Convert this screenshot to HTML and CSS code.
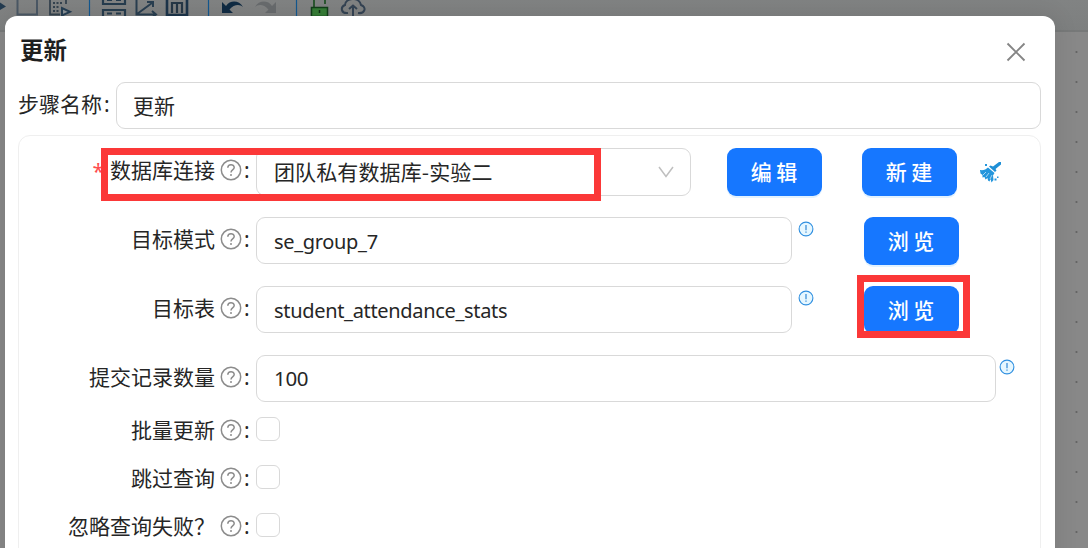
FILE: index.html
```html
<!DOCTYPE html>
<html lang="zh-CN">
<head>
<meta charset="utf-8">
<title>更新</title>
<link rel="stylesheet" href="styles.css">
</head>
<body>
<svg class="defs" width="0" height="0">
  <symbol id="help" viewBox="0 0 22 22"><circle cx="11" cy="11" r="9.7" fill="none" stroke="#8c8c8c" stroke-width="1.5"/><path d="M7.8 8.8C7.8 4.6 14.2 4.7 14.2 8.6C14.2 11 11 10.9 11 13.4" fill="none" stroke="#8c8c8c" stroke-width="1.5"/><circle cx="11" cy="15.9" r="1" fill="#8c8c8c"/></symbol>
  <symbol id="info" viewBox="0 0 16 16"><circle cx="8" cy="8" r="6.9" fill="#e6f7ff" stroke="#2f8fe0" stroke-width="1.1"/><path d="M8 4v5.2M8 10.6v1.2" stroke="#2f86d6" stroke-width="1.2"/></symbol>
</svg>
<div class="workspace">
  <svg class="toolbar" width="1088" height="32" viewBox="0 0 1088 32">
    <path d="M0 2.500L6 6.500L0 10z" fill="#233b50"/>
    <path d="M17.500 0V14.500H37V0" fill="none" stroke="#4b5865" stroke-width="2"/>
    <path d="M50 0V14.500H60M66 0V4" fill="none" stroke="#35434f" stroke-width="1.800"/>
    <path d="M53 3h9M53 7h7M53 11h6" fill="none" stroke="#35434f" stroke-width="2" stroke-dasharray="2 1.500"/>
    <path d="M62 8v7.500l8-3.700z" fill="#8b9398" stroke="#263e53" stroke-width="2"/>
    <path d="M89.500 0V16M208.500 0V16M296.500 0V16" stroke="#14588f" stroke-width="1.200"/>
    <path d="M103 0V4H125V0M103 16V10H125V16M107 0h5M116 0h5M107 13.500h5M116 13.500h5" fill="none" stroke="#263c4e" stroke-width="2.200"/>
    <path d="M136.500 0V14.500H155M137 14L152 3M147 2h6v5M152 11l4 3.500l-4 3" fill="none" stroke="#293e50" stroke-width="2"/>
    <path d="M167 0V15H187V0" fill="none" stroke="#1c344a" stroke-width="2.600"/>
    <path d="M172 13V3H182V13M177 3V13" fill="none" stroke="#263746" stroke-width="2.200"/>
    <path d="M222 2V13H233L229.500 9.500C234 4 240 4 243 7C239 0 230 0 226 6z" fill="#102b43"/>
    <path d="M276 2V13H265L268.500 9.500C264 4 258 4 255 7C259 0 268 0 272 6z" fill="#686b6d"/>
    <path d="M314 7V0M325 4V0" fill="none" stroke="#174d1c" stroke-width="1.600"/>
    <path d="M311.500 7.500h16v9h-16z" fill="#367c36" stroke="#123f19" stroke-width="1.500"/><path d="M319.500 10v3" stroke="#102f14" stroke-width="1.500"/>
    <path d="M348 13C341 14 340 7 345 5C345 -2 359 -4 361 5C367 7 365 14 358 13M353 16V6M349 9L353 5.500L357 9" fill="none" stroke="#344353" stroke-width="2"/>
    <path d="M0 31H1088" stroke="#777979" stroke-width="2"/>
  </svg>
  <svg class="grid" width="24" height="516" viewBox="0 32 24 516"><path d="M12.500 52V548" stroke="#626262" stroke-width="2.200" stroke-linecap="round" stroke-dasharray="0 30"/></svg>
  <main class="modal">
    <header class="head"><h1>更新</h1><svg width="20" height="20" viewBox="0 0 20 20"><path d="M1.500 1.500L18.500 18.500M18.500 1.500L1.500 18.500" stroke="#858585" stroke-width="1.900"/></svg></header>
    <div class="name-row"><label>步骤名称<span class="colon">:</span></label><div class="field">更新</div></div>
    <section class="panel">
      <div class="row"><label><b class="required">*</b>数据库连接<svg class="help"><use href="#help"/></svg><span class="colon">:</span></label>
        <div class="field select"><span>团队私有数据库-实验二</span><svg width="16" height="12" viewBox="0 0 16 12"><path d="M1 1L8 10.500L15 1" fill="none" stroke="#bfbfbf" stroke-width="1.500"/></svg></div>
        <button class="edit">编 辑</button><button class="create">新 建</button>
        <svg class="broom" width="24" height="24" viewBox="0 0 24 24"><path d="M20 2h2v2.500L16.500 9L17.500 10.500L16 12L10 6.500L11.500 5.500L14 6.500z" fill="#1e8fd6"/><path d="M9 7.500L15.500 13L14 15.500L14.500 20L12.500 22.500L11.500 19L10.500 21.500L9 20.500L8.500 18L6.500 19.500L5.500 17L3.500 17.500L3.500 15L1.500 13.500L1 10C4.500 10.500 7 9.500 9 7.500z" fill="#2496dc"/><path d="M10 13l-3 4M13 15l-2 4M7 12l-3 3" stroke="#fff" stroke-width=".6"/><path d="M6 4h2v2H6zM15.500 18.500h2v2h-2zM18 16.500h1.500v1.500H18z" fill="#2496dc"/></svg>
      </div>
      <div class="row"><label>目标模式<svg class="help"><use href="#help"/></svg><span class="colon">:</span></label><div class="field medium latin">se_group_7</div><svg class="info"><use href="#info"/></svg><button class="browse">浏 览</button></div>
      <div class="row"><label>目标表<svg class="help"><use href="#help"/></svg><span class="colon">:</span></label><div class="field medium latin">student_attendance_stats</div><svg class="info"><use href="#info"/></svg><button class="browse">浏 览</button></div>
      <div class="row last"><label>提交记录数量<svg class="help"><use href="#help"/></svg><span class="colon">:</span></label><div class="field wide latin number">100</div><svg class="info"><use href="#info"/></svg></div>
      <div class="row check"><label>批量更新<svg class="help"><use href="#help"/></svg><span class="colon">:</span></label><span class="box"></span></div>
      <div class="row check"><label>跳过查询<svg class="help"><use href="#help"/></svg><span class="colon">:</span></label><span class="box"></span></div>
      <div class="row check"><label>忽略查询失败？<svg class="help"><use href="#help"/></svg><span class="colon">:</span></label><span class="box"></span></div>
    </section>
  </main>
  <div class="mark connection"></div>
  <div class="mark target"></div>
</div>
</body>
</html>
```
FILE: styles.css
```css
* { box-sizing: border-box; }
body { margin: 0; overflow: hidden; font: 21px/30px "Noto Sans CJK SC", sans-serif; color: #262626; }
svg { display: block; flex: none; }
.defs { position: absolute; }
.workspace { position: relative; width: 1088px; height: 548px; overflow: hidden; background: #888; padding: 16px 0 0 5px; }
.toolbar { position: absolute; left: 0; top: 0; background: linear-gradient(#818383, #7d7f7f); }
.grid { position: absolute; left: 1064px; top: 32px; }
.modal { position: relative; width: 1050px; height: 560px; padding: 0 14px 0 13px; border-radius: 12px 12px 0 0; background: #fff; box-shadow: 0 0 24px rgba(0,0,0,.1); }
.head { height: 66px; padding: 2px 15px 0 2px; display: flex; align-items: center; justify-content: space-between; }
.head svg { margin-top: 4px; }
h1 { margin: -2px 0 0; font-size: 23.500px; line-height: 34px; font-weight: 700; color: #1f1f1f; }
.name-row { display: flex; height: 47px; }
.name-row label { width: 98px; padding-top: 6px; }
.name-row .field { flex: 1; line-height: 44px; }
.colon { font-family: "Noto Sans", sans-serif; }
.name-row .colon { margin-left: 2px; }
.field { height: 47px; flex: none; border: 1px solid #d9d9d9; border-radius: 9px; padding: 0 16px; line-height: 45px; white-space: nowrap; }
.panel { margin-top: 6px; padding-top: 12px; height: 440px; border: 1px solid #efefef; border-radius: 12px; }
.row { display: flex; align-items: flex-start; height: 69px; }
.row label { width: 237px; height: 42px; padding-right: 5px; flex: none; display: flex; align-items: center; justify-content: flex-end; white-space: nowrap; }
.help { width: 22px; height: 22px; margin: 2px 3px 0 5px; }
.row .colon { width: 6px; margin-top: 1px; text-indent: -1px; }
.required { color: #ff4d4f; font: 21px/30px "Noto Sans", sans-serif; margin: 3px 6px 0 0; }
.select { width: 435px; height: 48px; padding-left: 17px; line-height: 43px; display: flex; align-items: center; justify-content: space-between; }
.select span { margin-top: -2px; letter-spacing: .12px; }
.latin { padding-left: 17px; font-family: "Noto Sans", sans-serif; font-size: 20px; line-height: 47px; letter-spacing: -.32px; }
.number { line-height: 45px; font-size: 20.500px; letter-spacing: -.3px; }
.medium { width: 536px; }
.wide { width: 740px; }
.info { width: 16px; height: 16px; margin: 4px 0 0 6px; }
.wide + .info { margin-left: 3px; }
button { width: 95px; height: 48px; flex: none; padding: 0 1px 1px 0; border: 0; border-radius: 9px; background: #1677ff; color: #fff; box-shadow: 0 2px 0 #e2f2ff; font: 500 21px/43px "Noto Sans CJK SC", sans-serif; }
.edit { margin-left: 36px; }
.create { margin-left: 40px; }
.broom { margin: 12px 0 0 22px; }
.browse { margin-left: 50px; }
.last { height: 62px; }
.check { height: 48px; }
.check label { height: 24px; padding-top: 0; }
.box { width: 24px; height: 24px; border: 1px solid #d9d9d9; border-radius: 6px; }
.mark { position: absolute; border: 7px solid #fb3838; }
.connection { left: 101px; top: 148px; width: 500px; height: 53px; }
.target { left: 857px; top: 275px; width: 113px; height: 63px; }
```
